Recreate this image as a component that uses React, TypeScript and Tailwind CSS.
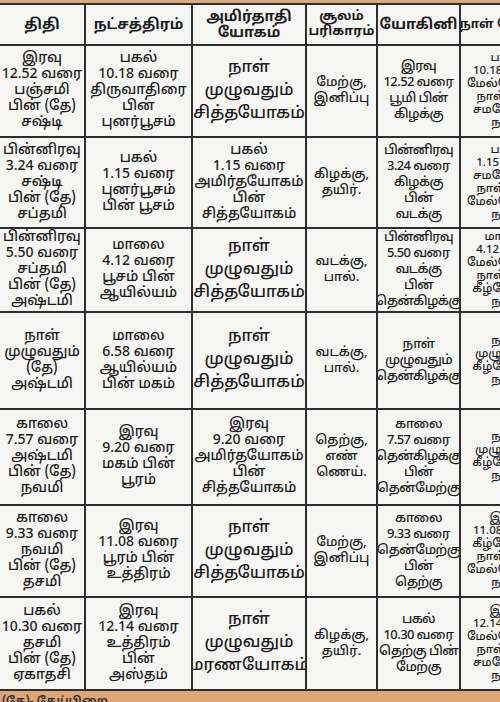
import React from "react";

type Cell = string[];

const header: Cell[] = [
  ["திதி"],
  ["நட்சத்திரம்"],
  ["அமிர்தாதி", "யோகம்"],
  ["சூலம்", "பரிகாரம்"],
  ["யோகினி"],
  ["நாள் நோக்கு"],
];

const rows: { h: number; cells: Cell[] }[] = [
  {
    h: 90,
    cells: [
      ["இரவு", "12.52 வரை", "பஞ்சமி", "பின் (தே)", "சஷ்டி"],
      ["பகல்", "10.18 வரை", "திருவாதிரை", "பின்", "புனர்பூசம்"],
      ["நாள்", "முழுவதும்", "சித்தயோகம்"],
      ["மேற்கு,", "இனிப்பு"],
      ["இரவு", "12.52 வரை", "பூமி பின்", "கிழக்கு"],
      ["பகல்", "10.18 வரை", "மேல்நோக்கு", "நாள் பின்", "சமநோக்கு", "நாள்"],
    ],
  },
  {
    h: 89,
    cells: [
      ["பின்னிரவு", "3.24 வரை", "சஷ்டி", "பின் (தே)", "சப்தமி"],
      ["பகல்", "1.15 வரை", "புனர்பூசம்", "பின் பூசம்"],
      ["பகல்", "1.15 வரை", "அமிர்தயோகம்", "பின்", "சித்தயோகம்"],
      ["கிழக்கு,", "தயிர்."],
      ["பின்னிரவு", "3.24 வரை", "கிழக்கு", "பின்", "வடக்கு"],
      ["பகல்", "1.15 வரை", "சமநோக்கு", "நாள் பின்", "மேல்நோக்கு", "நாள்"],
    ],
  },
  {
    h: 82,
    cells: [
      ["பின்னிரவு", "5.50 வரை", "சப்தமி", "பின் (தே)", "அஷ்டமி"],
      ["மாலை", "4.12 வரை", "பூசம் பின்", "ஆயில்யம்"],
      ["நாள்", "முழுவதும்", "சித்தயோகம்"],
      ["வடக்கு,", "பால்."],
      ["பின்னிரவு", "5.50 வரை", "வடக்கு", "பின்", "தென்கிழக்கு"],
      ["மாலை", "4.12 வரை", "மேல்நோக்கு", "நாள் பின்", "கீழ்நோக்கு", "நாள்"],
    ],
  },
  {
    h: 95,
    cells: [
      ["நாள்", "முழுவதும்", "(தே)", "அஷ்டமி"],
      ["மாலை", "6.58 வரை", "ஆயில்யம்", "பின் மகம்"],
      ["நாள்", "முழுவதும்", "சித்தயோகம்"],
      ["வடக்கு,", "பால்."],
      ["நாள்", "முழுவதும்", "தென்கிழக்கு"],
      ["நாள்", "முழுவதும்", "கீழ்நோக்கு", "நாள்"],
    ],
  },
  {
    h: 94,
    cells: [
      ["காலை", "7.57 வரை", "அஷ்டமி", "பின் (தே)", "நவமி"],
      ["இரவு", "9.20 வரை", "மகம் பின்", "பூரம்"],
      ["இரவு", "9.20 வரை", "அமிர்தயோகம்", "பின்", "சித்தயோகம்"],
      ["தெற்கு,", "எண்", "ணெய்."],
      ["காலை", "7.57 வரை", "தென்கிழக்கு", "பின்", "தென்மேற்கு"],
      ["நாள்", "முழுவதும்", "கீழ்நோக்கு", "நாள்"],
    ],
  },
  {
    h: 90,
    cells: [
      ["காலை", "9.33 வரை", "நவமி", "பின் (தே)", "தசமி"],
      ["இரவு", "11.08 வரை", "பூரம் பின்", "உத்திரம்"],
      ["நாள்", "முழுவதும்", "சித்தயோகம்"],
      ["மேற்கு,", "இனிப்பு"],
      ["காலை", "9.33 வரை", "தென்மேற்கு", "பின்", "தெற்கு"],
      ["இரவு", "11.08 வரை", "கீழ்நோக்கு", "நாள் பின்", "மேல்நோக்கு", "நாள்"],
    ],
  },
  {
    h: 91,
    cells: [
      ["பகல்", "10.30 வரை", "தசமி", "பின் (தே)", "ஏகாதசி"],
      ["இரவு", "12.14 வரை", "உத்திரம்", "பின்", "அஸ்தம்"],
      ["நாள்", "முழுவதும்", "மரணயோகம்"],
      ["கிழக்கு,", "தயிர்."],
      ["பகல்", "10.30 வரை", "தெற்கு பின்", "மேற்கு"],
      ["இரவு", "12.14 வரை", "மேல்நோக்கு", "நாள் பின்", "சமநோக்கு", "நாள்"],
    ],
  },
];

function cellClass(ci: number, n: number): string {
  if (ci === 2) {
    return n <= 3
      ? "text-[16.5px] leading-[17px] gap-[6px]"
      : "text-[14px] leading-[16px]";
  }
  if (ci === 3) return "text-[13px] leading-[16px]";
  if (ci === 4) return "text-[13px] leading-[16px] tracking-[-0.6px]";
  if (ci === 5) return "text-[11.5px] leading-[13px]";
  return "text-[14px] leading-[16px]";
}

function headerClass(i: number): string {
  if (i === 3) return "text-[13px] leading-[15px]";
  if (i === 5) return "text-[12.5px] leading-[16px]";
  return "text-[14.5px] leading-[16px]";
}

export default function App() {
  return (
    <div
      className="w-[500px] h-[702px] overflow-hidden bg-[#d8a878] flex flex-col"
      style={{ fontFamily: '"Noto Sans Tamil", "Lohit Tamil", "Noto Sans", sans-serif' }}
    >
      <div className="h-[3px] bg-[#d9aa7c] shrink-0" />
      <div className="bg-[#2f2f2f] pt-[2px] pb-[2px] shrink-0 w-[560px]">
        <div className="grid grid-cols-[84px_105px_112px_69px_81px_90px] gap-[2px] text-[#1c1c1c]">
          {header.map((c, i) => (
            <div
              key={i}
              className={`bg-[#f6f6f4] h-[39px] flex flex-col items-center justify-center font-bold overflow-hidden ${headerClass(i)}`}
            >
              {c.map((l, j) => (
                <span key={j} className="whitespace-nowrap">{l}</span>
              ))}
            </div>
          ))}
          {rows.map((r, ri) =>
            r.cells.map((c, ci) => (
              <div
                key={`${ri}-${ci}`}
                className={`bg-[#f6f6f4] flex flex-col items-center justify-center text-center font-medium overflow-hidden ${cellClass(ci, c.length)}`}
                style={{ height: r.h }}
              >
                {c.map((l, j) => (
                  <span key={j} className="whitespace-nowrap">{l}</span>
                ))}
              </div>
            ))
          )}
        </div>
      </div>
      <div className="flex-1 bg-[#dca774] px-[2px] pt-[4px] text-[12px] leading-[14px] text-[#2a2a2a] font-semibold whitespace-nowrap">
        (தே)- தேய்பிறை
      </div>
    </div>
  );
}
